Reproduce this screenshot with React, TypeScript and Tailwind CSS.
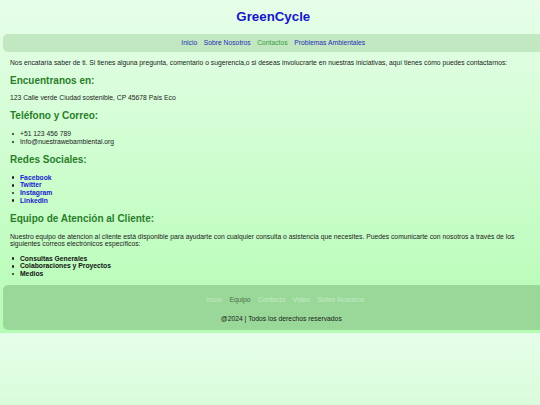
import React from 'react';

const navLinks = [
  { label: 'Inicio', active: false },
  { label: 'Sobre Nosotros', active: false },
  { label: 'Contactos', active: true },
  { label: 'Problemas Ambientales', active: false },
];

const footerLinks = [
  { label: 'Inicio', dim: true },
  { label: 'Equipo', dim: false },
  { label: 'Contacto', dim: true },
  { label: 'Video', dim: true },
  { label: 'Sobre Nosotros', dim: true },
];

const redes = ['Facebook', 'Twitter', 'Instagram', 'LinkedIn'];
const correos = ['Consultas Generales', 'Colaboraciones y Proyectos', 'Medios'];

function SectionTitle({ children }: { children: React.ReactNode }) {
  return (
    <h2 className="my-[8.3px] text-[10px] font-bold leading-[11.5px] text-[#2a7d2a]">{children}</h2>
  );
}

function Item({ children, className = '' }: { children: React.ReactNode; className?: string }) {
  return (
    <li className={`flex items-center ${className}`}>
      <span className="ml-[2px] mr-[5.5px] inline-block h-[2.5px] w-[2.5px] rounded-full bg-[#222]" />
      {children}
    </li>
  );
}

export default function App() {
  return (
    <div
      className="flex min-h-[405px] flex-col overflow-x-hidden text-[6.78px] leading-[7.7px] text-[#222]"
      style={{ fontFamily: '"Liberation Sans", Arial, sans-serif' }}
    >
      <div className="bg-gradient-to-b from-[#e6fee9] to-[#b4fcb3] px-[3.3px] pb-[3.5px]">
        {/* Header */}
        <header className="w-[540px]">
          <h1 className="pt-[7.6px] text-center text-[13.3px] font-bold leading-[17px] text-[#1616c8]">
            GreenCycle
          </h1>
          <nav className="mt-[9.4px] flex h-[18px] items-center justify-center gap-[6.5px] rounded-[5px] bg-[#c1e8c1]">
            {navLinks.map((l) => (
              <a
                key={l.label}
                href="#"
                className={l.active ? 'text-[#3a9a3a]' : 'text-[#2b2bb8]'}
              >
                {l.label}
              </a>
            ))}
          </nav>
        </header>

        {/* Main */}
        <main className="px-[6.7px]">
          <p className="my-[6.7px]">
            Nos encataría saber de ti. Si tienes alguna pregunta, comentario o sugerencia,o si deseas involucrarte en
            nuestras iniciativas, aquí tienes cómo puedes contactarnos:
          </p>

          <SectionTitle>Encuentranos en:</SectionTitle>
          <p className="my-[6.7px]">123 Calle verde Ciudad sostenible, CP 45678 País Eco</p>

          <SectionTitle>Teléfono y Correo:</SectionTitle>
          <ul className="my-[6.7px]">
            <Item>+51 123 456 789</Item>
            <Item>Info@nuestrawebambiental.org</Item>
          </ul>

          <SectionTitle>Redes Sociales:</SectionTitle>
          <ul className="my-[6.7px]">
            {redes.map((r) => (
              <Item key={r}>
                <a href="#" className="font-bold text-[#1a1ad0]">
                  {r}
                </a>
              </Item>
            ))}
          </ul>

          <SectionTitle>Equipo de Atención al Cliente:</SectionTitle>
          <p className="my-[6.7px]">
            Nuestro equipo de atencion al cliente está disponible para ayudarte con cualquier consulta o asistencia que
            necesites. Puedes comunicarte con nosotros a través de los siguientes correos electrónicos específicos:
          </p>
          <ul className="my-[6.7px]">
            {correos.map((c) => (
              <Item key={c} className="font-bold text-[#111]">
                {c}
              </Item>
            ))}
          </ul>
        </main>

        {/* Footer */}
        <footer className="w-[540px] rounded-[5px] bg-[#99d899] pb-[7px] pl-[16px] pt-[11px] text-center">
          <div className="flex justify-center gap-[7.5px] pl-[8px]">
            {footerLinks.map((l) => (
              <a key={l.label} href="#" className={l.dim ? 'text-[#c4ebc4]' : 'text-[#4d6f4d]'}>
                {l.label}
              </a>
            ))}
          </div>
          <p className="mt-[12px] text-[#1a1a1a]">@2024 | Todos los derechos reservados</p>
        </footer>
      </div>
      <div className="flex-1 bg-gradient-to-b from-[#e6fee9] to-[#d9fcdb]" />
    </div>
  );
}
